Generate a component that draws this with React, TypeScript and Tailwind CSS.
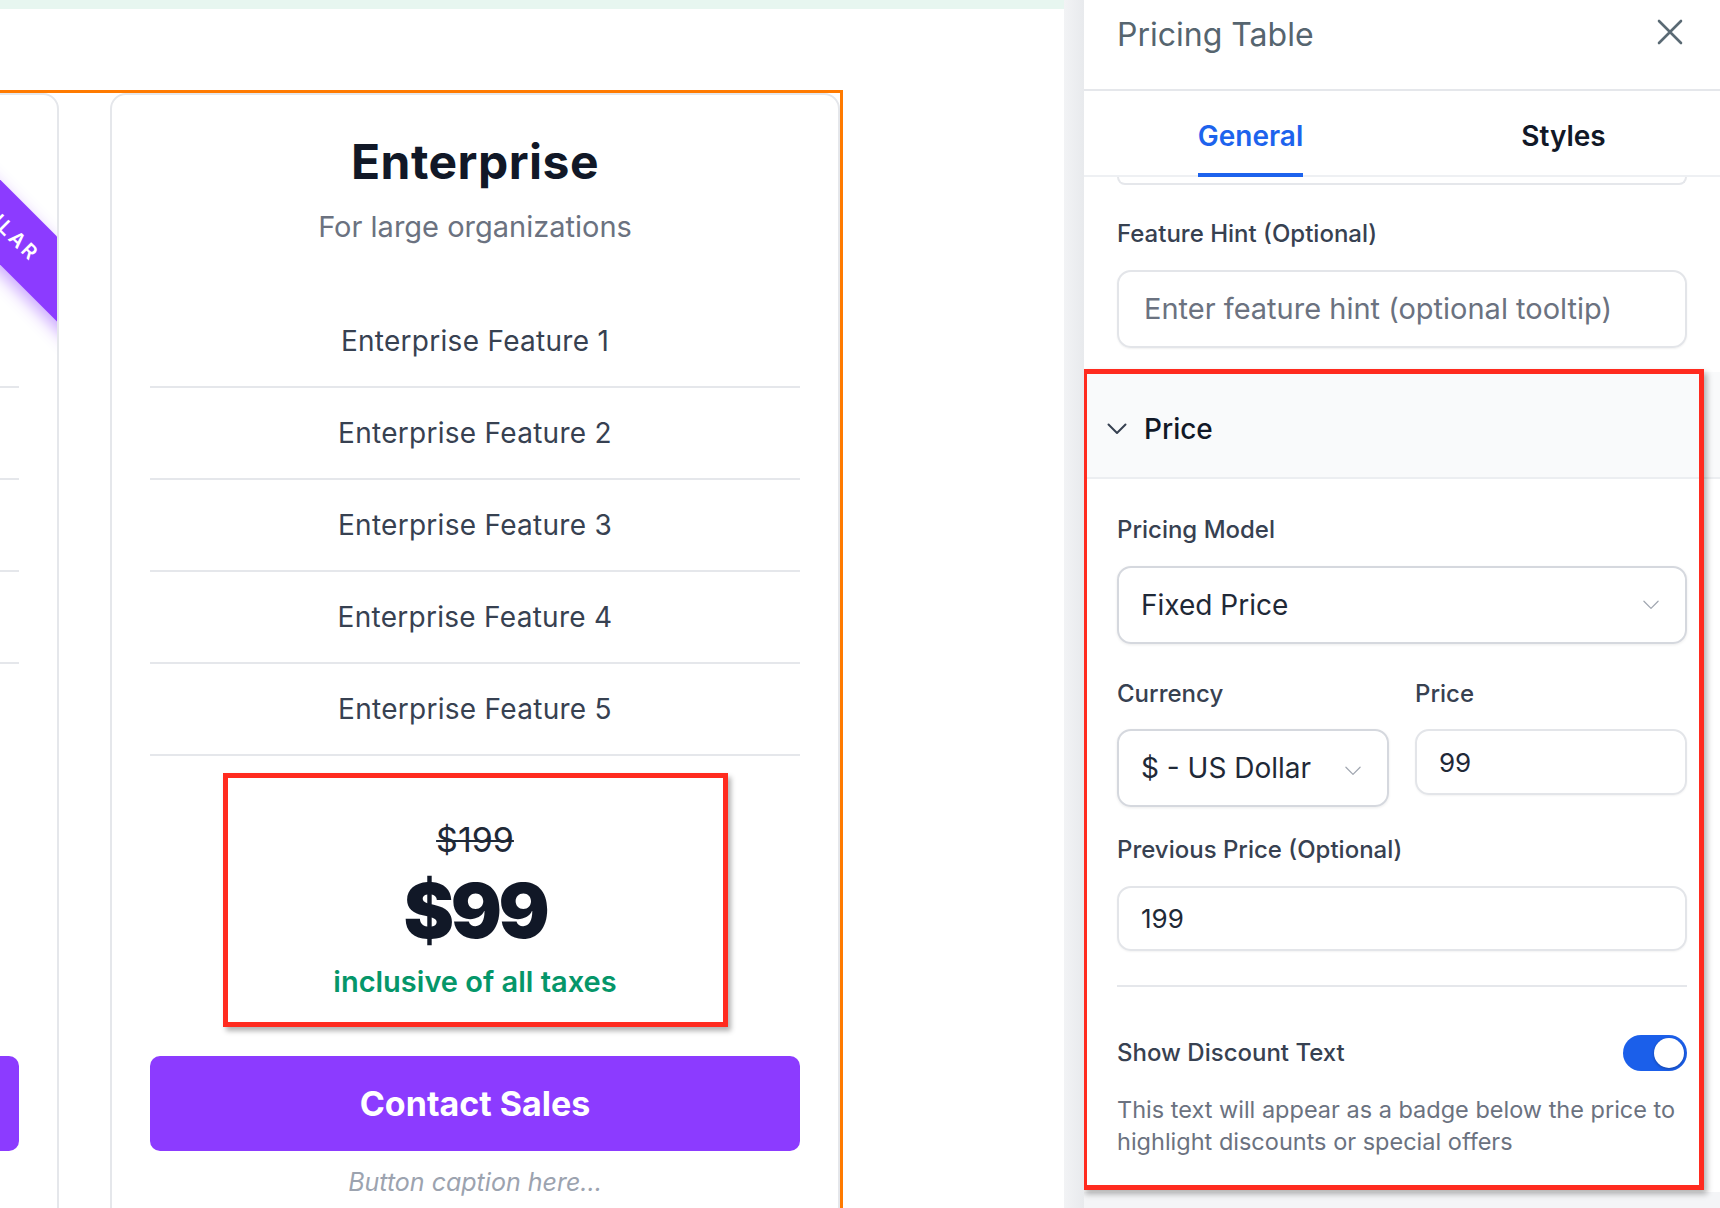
import { useState } from 'react';

type Plan = {
  id: string;
  name: string;
  subtitle: string;
  features: string[];
  oldPrice: string;
  price: string;
  note: string;
  cta: string;
  caption: string;
  ribbon?: boolean;
  marked?: boolean;
};

// the left card is scrolled almost out of view, only its edge, ribbon and button show
const plans: Plan[] = [
  {
    id: 'pro',
    name: '',
    subtitle: '',
    features: ['', '', '', ''],
    oldPrice: '',
    price: '',
    note: '',
    cta: '',
    caption: '',
    ribbon: true,
  },
  {
    id: 'enterprise',
    name: 'Enterprise',
    subtitle: 'For large organizations',
    features: [
      'Enterprise Feature 1',
      'Enterprise Feature 2',
      'Enterprise Feature 3',
      'Enterprise Feature 4',
      'Enterprise Feature 5',
    ],
    oldPrice: '$199',
    price: '$99',
    note: 'inclusive of all taxes',
    cta: 'Contact Sales',
    caption: 'Button caption here...',
    marked: true,
  },
];

function Chevron({ className }: { className?: string }) {
  return (
    <svg viewBox="0 0 20 12" fill="none" stroke="currentColor" strokeLinecap="round" strokeLinejoin="round" className={className}>
      <polyline points="1.5,1.5 10,10 18.5,1.5" />
    </svg>
  );
}

function PlanCard({ plan }: { plan: Plan }) {
  return (
    <div className="relative flex w-[730px] shrink-0 flex-col overflow-hidden rounded-[16px] border-2 border-[#e5e7eb] bg-white px-[38px] pt-[39px] pb-[40px]">
      {plan.ribbon && (
        <div className="absolute left-[484px] top-[92px] flex h-[60px] w-[360px] rotate-45 items-center justify-center bg-[#8c3bff] text-[20px] font-semibold tracking-[0.15em] text-white shadow-[0_6px_16px_rgba(140,59,255,0.45)]">
          POPULAR
        </div>
      )}
      <h2 className="h-[56px] text-center text-[48px] leading-[56px] font-bold tracking-[0.01em] text-[#111827]">{plan.name}</h2>
      <p className="mt-[19px] h-[36px] text-center text-[29px] leading-[36px] text-[#6b7280]">{plan.subtitle}</p>
      <ul className="mt-[51px]">
        {plan.features.map((f, i) => (
          <li key={i} className="flex h-[92px] items-center justify-center border-b-2 border-[#e5e7eb] text-[28px] tracking-[0.01em] text-[#374151]">
            {f}
          </li>
        ))}
      </ul>
      <div
        className={
          plan.marked
            ? 'mx-auto mt-[17px] flex h-[254px] w-[505px] flex-col items-center border-[5px] border-[#ff2b1f] pt-[42px] shadow-[3px_4px_5px_rgba(0,0,0,0.3)]'
            : 'mx-auto mt-[17px] flex h-[254px] w-[505px] flex-col items-center pt-[47px]'
        }
      >
        <span className="h-[40px] text-[34px] leading-[40px] text-[#1f2937] line-through decoration-2">{plan.oldPrice}</span>
        <span className="mt-[10px] h-[80px] text-[76px] leading-[80px] font-black tracking-[-0.045em] text-[#111827]">{plan.price}</span>
        <span className="mt-[14px] h-[36px] text-[29px] leading-[36px] font-semibold text-[#059669]">{plan.note}</span>
      </div>
      <div className="mt-auto pt-[29px]">
        <button className="block h-[95px] w-full rounded-[10px] bg-[#8c3bff] text-[34px] font-bold text-white">{plan.cta}</button>
        <p className="mt-[15px] h-[32px] text-center text-[25px] leading-[32px] italic text-[#9ca3af]">{plan.caption}</p>
      </div>
    </div>
  );
}

function Label({ children }: { children: React.ReactNode }) {
  return <div className="text-[24px] leading-[30px] font-medium text-[#374151]">{children}</div>;
}

function PricePanel() {
  const [discount, setDiscount] = useState(true);
  return (
    <div className="relative">
      <div className="flex h-[107px] items-center gap-[16px] border-b-2 border-[#eceef1] bg-[#f9fafb] pt-[8px] pl-[22px]">
        <Chevron className="h-[12px] w-[22px] text-[#374151] [stroke-width:2]" />
        <span className="text-[28px] font-medium text-[#111827]">Price</span>
      </div>
      <div className="px-[33px] pt-[36px] pb-[34px]">
        <Label>Pricing Model</Label>
        <div className="mt-[21px] flex h-[78px] items-center justify-between rounded-[14px] border-2 border-[#d5d8de] pr-[25px] pl-[22px] shadow-[0_1px_3px_rgba(0,0,0,0.08)]">
          <span className="text-[28px] text-[#1f2937]">Fixed Price</span>
          <Chevron className="h-[10px] w-[18px] text-[#a0a6b0] [stroke-width:1.5]" />
        </div>
        <div className="mt-[35px] grid grid-cols-2 items-start gap-x-[26px]">
          <div>
            <Label>Currency</Label>
            <div className="mt-[20px] flex h-[78px] items-center justify-between rounded-[14px] border-2 border-[#d5d8de] pr-[25px] pl-[22px] shadow-[0_1px_3px_rgba(0,0,0,0.08)]">
              <span className="text-[28px] text-[#1f2937]">$ - US Dollar</span>
              <Chevron className="mt-[6px] h-[10px] w-[18px] text-[#a0a6b0] [stroke-width:1.5]" />
            </div>
          </div>
          <div>
            <Label>Price</Label>
            <div className="mt-[20px] flex h-[66px] items-center rounded-[14px] border-2 border-[#e3e5e9] px-[22px] text-[26px] text-[#1f2937] shadow-[0_1px_2px_rgba(0,0,0,0.05)]">
              99
            </div>
          </div>
        </div>
        <div className="mt-[28px]">
          <Label>Previous Price (Optional)</Label>
        </div>
        <div className="mt-[21px] flex h-[65px] items-center rounded-[14px] border-2 border-[#e3e5e9] px-[22px] text-[26px] text-[#1f2937] shadow-[0_1px_2px_rgba(0,0,0,0.05)]">
          199
        </div>
        <div className="mt-[34px] h-[2px] bg-[#e5e7eb]" />
        <div className="mt-[48px] flex h-[36px] items-center justify-between">
          <Label>Show Discount Text</Label>
          <button
            onClick={() => setDiscount(!discount)}
            className={discount ? 'flex h-[36px] w-[64px] items-center justify-end rounded-full bg-[#1b5fea] px-[3px]' : 'flex h-[36px] w-[64px] items-center justify-start rounded-full bg-[#d1d5db] px-[3px]'}
          >
            <span className="h-[30px] w-[30px] rounded-full bg-white shadow-[0_1px_3px_rgba(0,0,0,0.3)]" />
          </button>
        </div>
        <p className="mt-[23px] text-[23.5px] leading-[32px] text-[#6b7280]">
          This text will appear as a badge below the price to highlight discounts or special offers
        </p>
      </div>
      <div className="pointer-events-none absolute top-[-3px] right-[16px] bottom-[2px] left-[-2px] border-[5px] border-[#ff2b1f] shadow-[3px_4px_6px_rgba(0,0,0,0.3)]" />
    </div>
  );
}

export default function App() {
  const [tab, setTab] = useState('General');
  return (
    <div className="flex h-[1208px] w-[1720px] overflow-hidden bg-white font-['Inter',sans-serif]">
      <div className="flex w-[1064px] shrink-0 flex-col">
        <div className="h-[9px] shrink-0 bg-[#e7f6f0]" />
        <div className="shrink-0 pt-[81px]">
          <div className="ml-[-674px] flex w-[1517px] gap-[51px] border-[3px] border-[#ff7a00]">
            {plans.map((p) => (
              <PlanCard key={p.id} plan={p} />
            ))}
          </div>
        </div>
      </div>

      <div className="w-[20px] shrink-0 bg-gradient-to-r from-[#f2f3f5] to-[#e8eaed]" />

      <div className="flex w-[636px] shrink-0 flex-col bg-white">
        <div className="flex h-[91px] shrink-0 items-start justify-between border-b-2 border-[#e5e7eb] pt-[13px] pr-[37px] pl-[33px]">
          <h1 className="text-[32px] leading-[44px] text-[#56656f]">Pricing Table</h1>
          <svg viewBox="0 0 26 26" className="mt-[6px] h-[26px] w-[26px] text-[#5a6a74]" fill="none" stroke="currentColor" strokeWidth="2.6" strokeLinecap="round">
            <path d="M2 2L24 24M24 2L2 24" />
          </svg>
        </div>

        <div className="flex h-[86px] shrink-0 border-b-2 border-[#eef0f3] pl-[10px]">
          {['General', 'Styles'].map((t) => (
            <button key={t} onClick={() => setTab(t)} className="flex flex-1 items-end justify-center">
              <span
                className={
                  tab === t
                    ? '-mb-[2px] border-b-4 border-[#1d63ed] pb-[19px] text-[28px] leading-[36px] font-semibold text-[#1d63ed]'
                    : '-mb-[2px] border-b-4 border-transparent pb-[19px] text-[28px] leading-[36px] font-semibold text-[#111827]'
                }
              >
                {t}
              </span>
            </button>
          ))}
        </div>

        <div className="flex flex-1 flex-col overflow-hidden">
          <div className="mx-[33px] h-[8px] shrink-0 rounded-b-[14px] border-2 border-t-0 border-[#e5e7eb]" />
          <div className="mt-[34px] shrink-0 px-[33px]">
            <Label>Feature Hint (Optional)</Label>
            <div className="mt-[21px] flex h-[78px] items-center rounded-[14px] border-2 border-[#e3e5e9] px-[25px] text-[29px] text-[#6b7280] shadow-[0_1px_2px_rgba(0,0,0,0.06)]">
              Enter feature hint (optional tooltip)
            </div>
          </div>
          <div className="mt-[24px] shrink-0">
            <PricePanel />
          </div>
          <div className="flex-1 bg-[#f4f5f7]" />
        </div>
      </div>
    </div>
  );
}
